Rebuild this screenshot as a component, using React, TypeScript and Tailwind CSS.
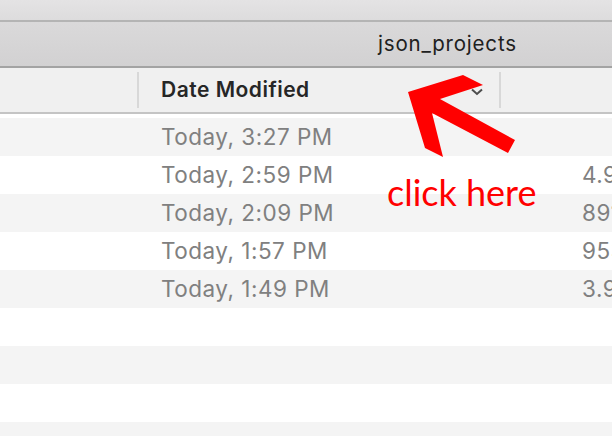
const rows = [
  { date: 'Today, 3:27 PM', size: '' },
  { date: 'Today, 2:59 PM', size: '4.9 MB' },
  { date: 'Today, 2:09 PM', size: '891 KB' },
  { date: 'Today, 1:57 PM', size: '953 KB' },
  { date: 'Today, 1:49 PM', size: '3.9 MB' },
  { date: '', size: '' },
  { date: '', size: '' },
  { date: '', size: '' },
  { date: '', size: '' },
]

function Chevron() {
  return (
    <svg width="14" height="8" viewBox="0 0 14 8" className="shrink-0 mt-[4px]">
      <path d="M2 1.5 L7 6 L12 1.5" fill="none" stroke="#4d4d4d" strokeWidth="2" />
    </svg>
  )
}

function RedArrow() {
  return (
    <svg
      width="612"
      height="436"
      viewBox="0 0 612 436"
      className="absolute left-0 top-0 pointer-events-none"
    >
      <polygon
        points="408,92 463,75 483,85 440,99 515,140 508,153 432,113 443,157 425,148"
        fill="#ff0000"
      />
    </svg>
  )
}

export default function App() {
  return (
    <div className="relative w-[612px] h-[436px] overflow-hidden bg-white font-['Inter','Liberation_Sans',sans-serif]">
      {/* Toolbar edge */}
      <div className="h-[20px] bg-gradient-to-b from-[#e4e3e4] to-[#dddcdd]" />
      <div className="h-[2px] bg-[#b4b4b4]" />

      {/* Path bar */}
      <div className="h-[44px] flex items-center bg-gradient-to-b from-[#dad9da] to-[#d2d1d2]">
        <span className="pl-[378px] text-[20.5px] text-[#202020] tracking-[0.8px]">json_projects</span>
      </div>
      <div className="h-[2px] bg-[#a3a3a3]" />

      {/* Column headers */}
      <div className="h-[44px] flex items-center bg-[#f0f0f0] w-[700px]">
        <div className="w-[137px] shrink-0" />
        <div className="w-[2px] h-[36px] bg-[#d8d8d8] shrink-0" />
        <div className="w-[360px] shrink-0 flex items-center justify-between pl-[22px] pr-[15px]">
          <span className="text-[21px] font-semibold text-[#262626] tracking-[0.5px]">Date Modified</span>
          <Chevron />
        </div>
        <div className="w-[2px] h-[36px] bg-[#d8d8d8] shrink-0" />
      </div>
      <div className="h-[2px] bg-[#c4c4c4]" />
      <div className="h-[4px] bg-white" />

      {/* File rows */}
      <div className="flex flex-col">
        {rows.map((row, i) => (
          <div
            key={i}
            className={`h-[38px] flex items-center w-[720px] text-[22.5px] tracking-[0.5px] text-[#808080] ${i % 2 === 0 ? 'bg-[#f4f4f4]' : 'bg-white'}`}
          >
            <div className="w-[161px] shrink-0" />
            <div className="w-[421px] shrink-0">{row.date}</div>
            <div className="shrink-0 whitespace-nowrap">{row.size}</div>
          </div>
        ))}
      </div>

      {/* Annotation */}
      <RedArrow />
      <span className="absolute left-[387px] top-[174px] text-[36px] leading-none text-[#ff0000] font-['Lato','Open_Sans',sans-serif] font-normal">
        click here
      </span>
    </div>
  )
}
